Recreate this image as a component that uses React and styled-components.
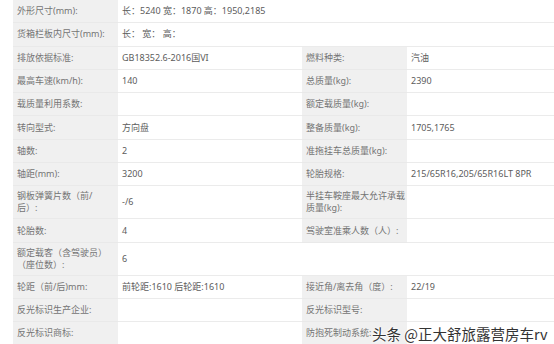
import React from "react"
import styled, { createGlobalStyle } from "styled-components"

const GlobalStyle = createGlobalStyle`
  html, body {
    margin: 0;
    padding: 0;
    background: #fff;
  }
  body {
    font-family: "Noto Sans", "Noto Sans CJK SC", sans-serif;
  }
`

const Page = styled.div`
  position: relative;
  width: 554px;
  height: 344px;
  overflow: hidden;
  padding-left: 13px;
  box-sizing: border-box;
`

const Sheet = styled.div`
  display: grid;
  grid-template-columns: 105px 184px 105px 147px;
  grid-auto-rows: minmax(23.3px, auto);
  font-size: 9px;
  line-height: 12px;
`

const Label = styled.div`
  display: flex;
  align-items: center;
  padding: 4px 2px 4px 4px;
  box-sizing: border-box;
  background: #f0f0f0;
  color: #747474;
  white-space: nowrap;
  border-bottom: 1px solid #e9e9e9;
`

const Value = styled.div`
  display: flex;
  align-items: center;
  padding: 4px 4px;
  box-sizing: border-box;
  background: #fff;
  color: #5c5c5c;
  white-space: nowrap;
  border-bottom: 1px solid #ebebeb;
  grid-column: span ${props => props.span || 1};
`

const Watermark = styled.div`
  position: absolute;
  left: 372px;
  top: 325px;
  font-family: "Noto Sans CJK SC", sans-serif;
  font-size: 14.5px;
  line-height: 18px;
  color: #333;
  white-space: nowrap;
  text-shadow: 0 0 2px #fff, 0 0 2px #fff, 0 0 3px #fff;
`

const rows = [
  { label: "外形尺寸(mm):", value: "长：5240 宽：1870 高：1950,2185", wide: true },
  { label: "货箱栏板内尺寸(mm):", value: "长： 宽： 高：", wide: true },
  { label: "排放依据标准:", value: "GB18352.6-2016国VI", label2: "燃料种类:", value2: "汽油" },
  { label: "最高车速(km/h):", value: "140", label2: "总质量(kg):", value2: "2390" },
  { label: "载质量利用系数:", value: "", label2: "额定载质量(kg):", value2: "" },
  { label: "转向型式:", value: "方向盘", label2: "整备质量(kg):", value2: "1705,1765" },
  { label: "轴数:", value: "2", label2: "准拖挂车总质量(kg):", value2: "" },
  { label: "轴距(mm):", value: "3200", label2: "轮胎规格:", value2: "215/65R16,205/65R16LT 8PR" },
  {
    label: <>钢板弹簧片数（前/<br />后）:</>,
    value: "-/6",
    label2: <>半挂车鞍座最大允许承载<br />质量(kg):</>,
    value2: "",
  },
  { label: "轮胎数:", value: "4", label2: "驾驶室准乘人数（人）:", value2: "" },
  { label: <>额定载客（含驾驶员）<br />（座位数）:</>, value: "6", blank: true },
  { label: "轮距（前/后)mm:", value: "前轮距:1610 后轮距:1610", label2: "接近角/离去角（度）:", value2: "22/19" },
  { label: "反光标识生产企业:", value: "", label2: "反光标识型号:", value2: "" },
  { label: "反光标识商标:", value: "", label2: "防抱死制动系统:", value2: "" },
]

export default function App() {
  return (
    <Page>
      <GlobalStyle />
      <Sheet>
        {rows.map((r, i) => (
          <React.Fragment key={i}>
            <Label>{r.label}</Label>
            {r.wide ? (
              <Value span={3}>{r.value}</Value>
            ) : (
              <>
                <Value>{r.value}</Value>
                {r.blank ? (
                  <Value span={2} />
                ) : (
                  <>
                    <Label>{r.label2}</Label>
                    <Value>{r.value2}</Value>
                  </>
                )}
              </>
            )}
          </React.Fragment>
        ))}
      </Sheet>
      <Watermark>头条 @正大舒旅露营房车rv</Watermark>
    </Page>
  )
}
